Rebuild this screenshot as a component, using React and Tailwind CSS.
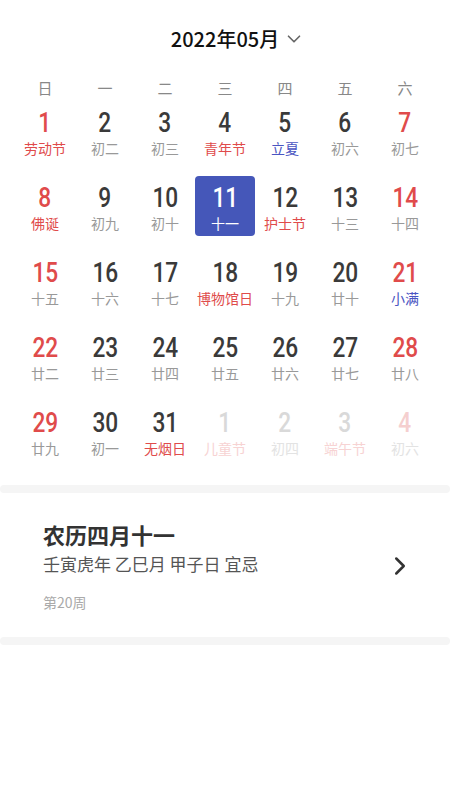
import { ChevronDown, ChevronRight } from "lucide-react";

const weekdays = ["日", "一", "二", "三", "四", "五", "六"];

// [day, lunar, lunarKind, faded]
// lunarKind: "" plain, "r" red festival, "b" blue solar term
const days = [
  [1, "劳动节", "r"], [2, "初二", ""], [3, "初三", ""], [4, "青年节", "r"], [5, "立夏", "b"], [6, "初六", ""], [7, "初七", ""],
  [8, "佛诞", "r"], [9, "初九", ""], [10, "初十", ""], [11, "十一", ""], [12, "护士节", "r"], [13, "十三", ""], [14, "十四", ""],
  [15, "十五", ""], [16, "十六", ""], [17, "十七", ""], [18, "博物馆日", "r"], [19, "十九", ""], [20, "廿十", ""], [21, "小满", "b"],
  [22, "廿二", ""], [23, "廿三", ""], [24, "廿四", ""], [25, "廿五", ""], [26, "廿六", ""], [27, "廿七", ""], [28, "廿八", ""],
  [29, "廿九", ""], [30, "初一", ""], [31, "无烟日", "r"], [1, "儿童节", "r", true], [2, "初四", "", true], [3, "端午节", "r", true], [4, "初六", "", true],
];

const cjk = { fontFamily: '"Noto Sans CJK SC", "Noto Sans", sans-serif' };
const num = { fontFamily: 'Roboto, "Noto Sans CJK SC", sans-serif' };

function DayCell({ day, lunar, kind, faded, col }) {
  const selected = day === 11 && !faded;
  const weekend = col === 0 || col === 6;

  let numColor = weekend ? "text-[#e04b4b]" : "text-[#3a3a3a]";
  let lunarColor =
    kind === "r" ? "text-[#e04b4b]" : kind === "b" ? "text-[#4a55c2]" : "text-[#999999]";
  if (faded) {
    numColor = weekend ? "text-[#f5cfcf]" : "text-[#d9d9d9]";
    lunarColor = kind === "r" ? "text-[#f7d3d3]" : "text-[#e3e3e3]";
  }
  if (selected) {
    numColor = "text-white";
    lunarColor = "text-white";
  }

  return (
    <div
      className={`h-[60px] flex flex-col items-center pt-[7px] rounded-[4px] ${
        selected ? "bg-[#4557b9]" : ""
      }`}
    >
      <div className={`text-[27px] leading-[30px] font-medium scale-x-[0.84] ${numColor}`} style={num}>
        {day}
      </div>
      <div className={`text-[14px] leading-[20px] whitespace-nowrap ${lunarColor}`} style={cjk}>
        {lunar}
      </div>
    </div>
  );
}

export default function App() {
  return (
    <div className="w-[450px] h-[800px] bg-white overflow-hidden" style={cjk}>
      <div className="pt-[24px] h-[54px] flex items-center justify-center">
        <span className="text-[20px] leading-[30px] font-medium text-[#111111] ml-[26px]">
          2022年05月
        </span>
        <ChevronDown className="w-[22px] h-[22px] text-[#666666] ml-[4px]" strokeWidth={1.8} />
      </div>

      <div className="mt-[24px] px-[15px] grid grid-cols-7">
        {weekdays.map((w) => (
          <div key={w} className="h-[20px] text-center text-[15px] leading-[20px] text-[#888888]">
            {w}
          </div>
        ))}
      </div>

      <div className="mt-[3px] px-[15px] grid grid-cols-7 gap-y-[15px]">
        {days.map(([day, lunar, kind, faded], i) => (
          <DayCell key={i} day={day} lunar={lunar} kind={kind} faded={!!faded} col={i % 7} />
        ))}
      </div>

      <div className="mt-[24px] h-[8px] rounded-full bg-[#f5f5f5]" />

      <div className="pl-[43px] pr-[35px] pt-[26px] pb-[25px] flex items-center">
        <div className="flex-1">
          <div className="text-[22px] leading-[30px] font-bold text-[#333333]">农历四月十一</div>
          <div className="mt-[3px] text-[17px] leading-[24px] text-[#555555]">
            壬寅虎年 乙巳月 甲子日 宜忌
          </div>
          <div className="mt-[16px] text-[14px] leading-[20px] text-[#aaaaaa]">第20周</div>
        </div>
        <ChevronRight className="w-[30px] h-[30px] text-[#333333]" strokeWidth={2} />
      </div>

      <div className="h-[8px] rounded-full bg-[#f5f5f5]" />
    </div>
  );
}
